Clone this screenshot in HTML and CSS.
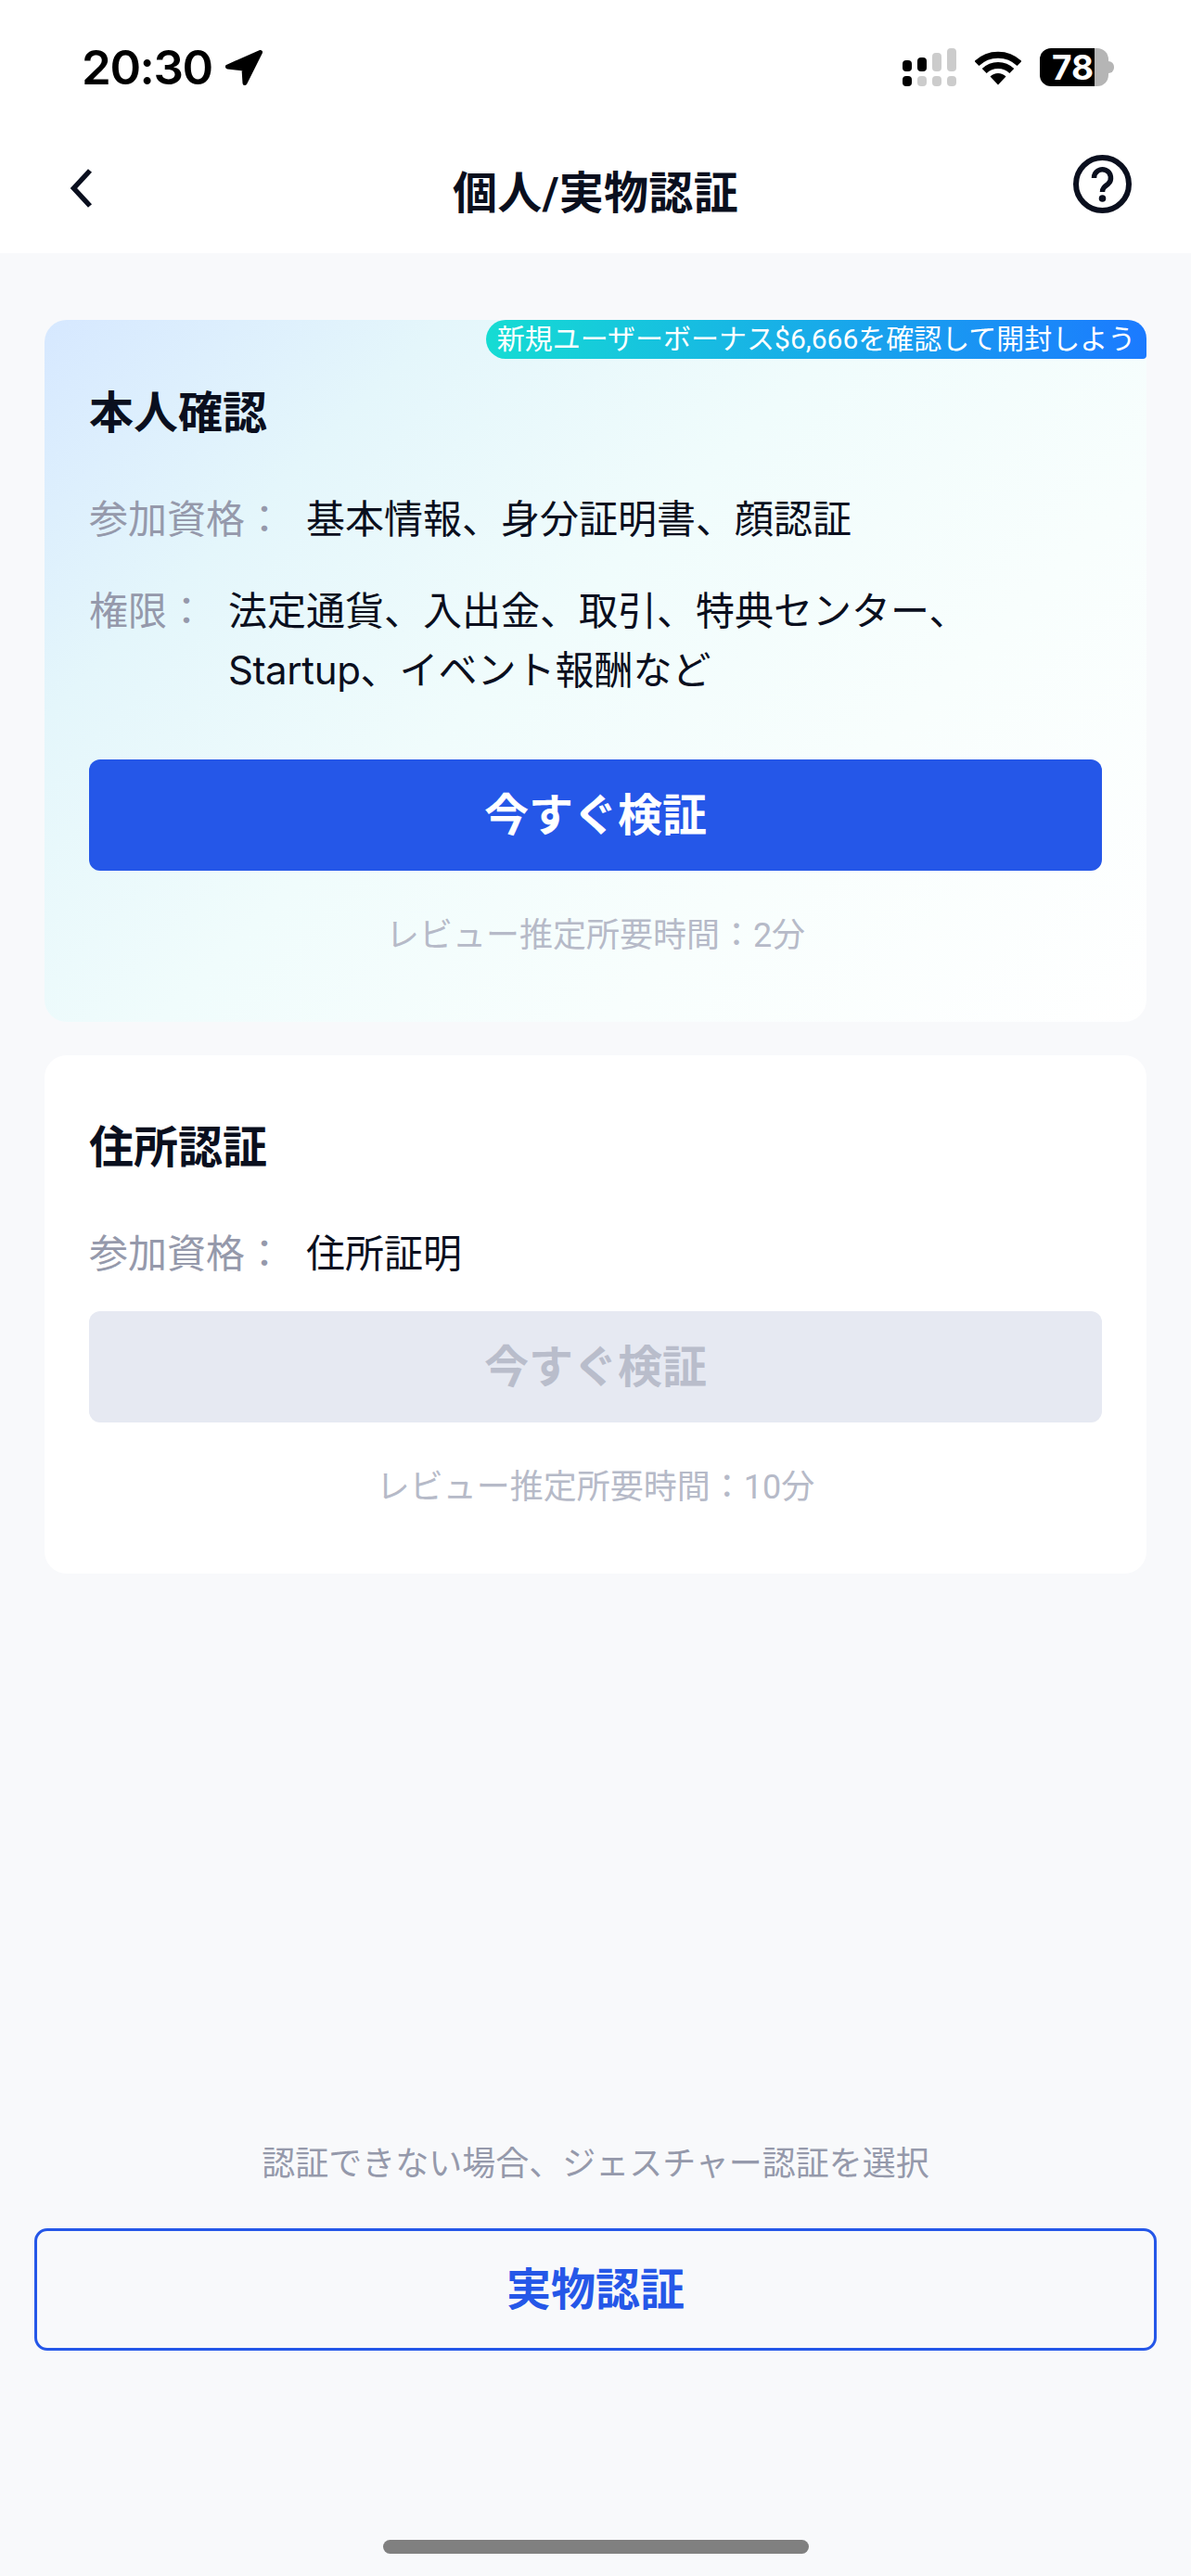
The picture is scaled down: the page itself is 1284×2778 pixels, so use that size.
FILE: index.html
```html
<!DOCTYPE html>
<html lang="ja">
<head>
<meta charset="utf-8">
<title>個人/実物認証</title>
<link rel="stylesheet" href="styles.css">
</head>
<body>
<div class="screen">
  <div class="status">
    <div class="status-left">
      <span class="time">20:30</span>
      <svg class="loc" width="40" height="38" viewBox="0 0 40 38"><path d="M37.500 2.500 2.500 18 20 20 21 35.500Z" fill="#000" stroke="#000" stroke-width="5" stroke-linejoin="round"/></svg>
    </div>
    <div class="status-right">
      <svg width="58" height="41" viewBox="0 0 58 41">
        <rect x="0" y="13" width="10" height="12" rx="4" fill="#000"/>
        <rect x="16" y="10" width="10" height="15" rx="4" fill="#000"/>
        <rect x="32" y="5" width="10" height="20" rx="4" fill="#ccc"/>
        <rect x="48" y="0" width="10" height="25" rx="4" fill="#ccc"/>
        <rect x="0" y="30" width="10" height="11" rx="4" fill="#000"/>
        <rect x="16" y="30" width="10" height="11" rx="4" fill="#ccc"/>
        <rect x="32" y="30" width="10" height="11" rx="4" fill="#ccc"/>
        <rect x="48" y="30" width="10" height="11" rx="4" fill="#ccc"/>
      </svg>
      <svg class="wifi" width="50" height="38" viewBox="0 0 50 38">
        <path d="M2 14.500A33 33 0 0 1 48 14.500M10.200 22.500A21 21 0 0 1 39.800 22.500" fill="none" stroke="#000" stroke-width="7"/>
        <path d="M25 37.500 16.500 28.500A12 12 0 0 1 33.500 28.500Z" fill="#000"/>
      </svg>
      <div class="battery">78</div>
    </div>
  </div>

  <header class="nav">
    <svg class="back" width="28" height="46" viewBox="0 0 28 46"><path d="M23 4 5.500 23 23 42" fill="none" stroke="#0a0f1e" stroke-width="5.500"/></svg>
    <h1 class="nav-title">個人/実物認証</h1>
    <svg class="help" width="63" height="63" viewBox="0 0 63 63">
      <circle cx="31.500" cy="31.500" r="28.500" fill="none" stroke="#0a0f1e" stroke-width="6"/>
      <path d="M22.500 25a9 9 0 1 1 15 6.500c-4 3-6 4.500-6 8.500" fill="none" stroke="#0a0f1e" stroke-width="5.500"/>
      <circle cx="31.500" cy="47" r="3.800" fill="#0a0f1e"/>
    </svg>
  </header>

  <main class="content">
    <section class="card card-identity">
      <div class="badge">新規ユーザーボーナス$6,666を確認して開封しよう</div>
      <h2 class="card-title">本人確認</h2>
      <div class="rows">
        <div class="row"><span class="label">参加資格：</span><span class="value">基本情報、身分証明書、顔認証</span></div>
        <div class="row"><span class="label">権限：</span><span class="value">法定通貨、入出金、取引、特典センター、<br><span class="latin">Startup</span>、イベント報酬など</span></div>
      </div>
      <button class="btn btn-primary">今すぐ検証</button>
      <p class="note">レビュー推定所要時間：2分</p>
    </section>

    <section class="card card-address">
      <h2 class="card-title">住所認証</h2>
      <div class="rows">
        <div class="row"><span class="label">参加資格：</span><span class="value">住所証明</span></div>
      </div>
      <button class="btn btn-disabled">今すぐ検証</button>
      <p class="note">レビュー推定所要時間：10分</p>
    </section>
  </main>

  <footer class="footer">
    <p class="hint">認証できない場合、ジェスチャー認証を選択</p>
    <button class="btn-outline">実物認証</button>
    <div class="home-bar"></div>
  </footer>
</div>
</body>
</html>
```

FILE: styles.css
```css
* { box-sizing: border-box; }
html, body { margin: 0; padding: 0; }
body {
  background: #f8f9fb;
  color: #0a0f1e;
  font-family: Roboto, "Noto Sans CJK JP", sans-serif;
}
.screen {
  width: 1284px;
  height: 2778px;
  display: flex;
  flex-direction: column;
  overflow: hidden;
}
.status {
  height: 146px;
  background: #fff;
  display: flex;
  justify-content: space-between;
  align-items: flex-start;
  padding: 52px 89px 0 88px;
}
.status-left { display: flex; align-items: center; gap: 14px; }
.time {
  font-family: Inter, sans-serif;
  font-size: 51px;
  font-weight: 600;
  line-height: 41px;
  color: #000;
  letter-spacing: -1.4px;
}
.status-right { display: flex; align-items: flex-start; gap: 20px; }
.wifi { margin-top: 2px; }
.battery {
  position: relative;
  width: 74px;
  height: 41px;
  border-radius: 12px;
  background: linear-gradient(90deg, #000 59px, #b5b5b5 59px);
  color: #fff;
  font-family: Inter, sans-serif;
  font-size: 37px;
  font-weight: 700;
  line-height: 41px;
  padding-left: 13px;
}
.battery::after {
  content: "";
  position: absolute;
  right: -6px;
  top: 14px;
  width: 6px;
  height: 13px;
  border-radius: 0 7px 7px 0;
  background: #b5b5b5;
}
.nav {
  height: 127px;
  background: #fff;
  display: grid;
  grid-template-columns: 1fr auto 1fr;
  align-items: start;
  padding: 0 64px;
}
.back { margin: 34px 0 0 10px; }
.help { justify-self: end; margin-top: 21px; }
.nav-title {
  margin: 30px 0 0;
  font-size: 48px;
  font-weight: 700;
  line-height: 66px;
  letter-spacing: 0.3px;
}
.content {
  padding: 72px 48px 0;
  display: flex;
  flex-direction: column;
  gap: 36px;
}
.card {
  position: relative;
  border-radius: 24px;
  background: #fff;
  padding: 74px 48px 68px;
}
.card-identity {
  background: linear-gradient(135deg, #d6e8ff 0%, #e4f6fb 22%, #f0fcfc 45%, #f8fefd 70%, #fff 100%);
}
.card-address { padding-top: 73px; }
.badge {
  position: absolute;
  top: 0;
  right: 0;
  width: 712px;
  height: 42px;
  border-radius: 21px 20px 4px 21px;
  background: linear-gradient(90deg, #15dcd3, #1b7aff);
  color: #fff;
  font-size: 30px;
  line-height: 42px;
  text-align: center;
  white-space: nowrap;
}
.card-title {
  margin: 0;
  font-size: 48px;
  font-weight: 700;
  line-height: 54px;
}
.rows {
  margin-top: 56px;
  display: flex;
  flex-direction: column;
  gap: 35px;
}
.row {
  display: flex;
  gap: 24px;
  font-size: 42px;
  line-height: 64px;
}
.label { color: #9599ab; flex: none; }
.value { color: #0a0f1e; }
.latin { font-family: Inter, sans-serif; line-height: 1; letter-spacing: -0.4px; }
.btn {
  display: block;
  width: 100%;
  height: 120px;
  border: 0;
  border-radius: 12px;
  font-family: inherit;
  font-size: 48px;
  font-weight: 700;
  text-align: center;
  padding: 0 0 8px;
}
.btn-primary { background: #2557e8; color: #fff; margin-top: 63px; }
.btn-disabled { background: #e6e9f2; color: #b9bdcb; margin-top: 29px; }
.note {
  margin: 45px 0 0;
  font-size: 36px;
  line-height: 50px;
  text-align: center;
  color: #b6bac8;
}
.footer {
  margin-top: auto;
  display: flex;
  flex-direction: column;
  align-items: center;
}
.hint {
  margin: 0;
  font-size: 36px;
  line-height: 50px;
  color: #9599ab;
}
.btn-outline {
  margin-top: 44px;
  width: 1210px;
  height: 132px;
  border: 3px solid #2557e8;
  border-radius: 14px;
  background: transparent;
  color: #2557e8;
  font-family: inherit;
  font-size: 48px;
  font-weight: 700;
  padding: 0 0 8px;
}
.home-bar {
  margin: 204px 0 24px;
  width: 459px;
  height: 15px;
  border-radius: 8px;
  background: #808080;
}
```
